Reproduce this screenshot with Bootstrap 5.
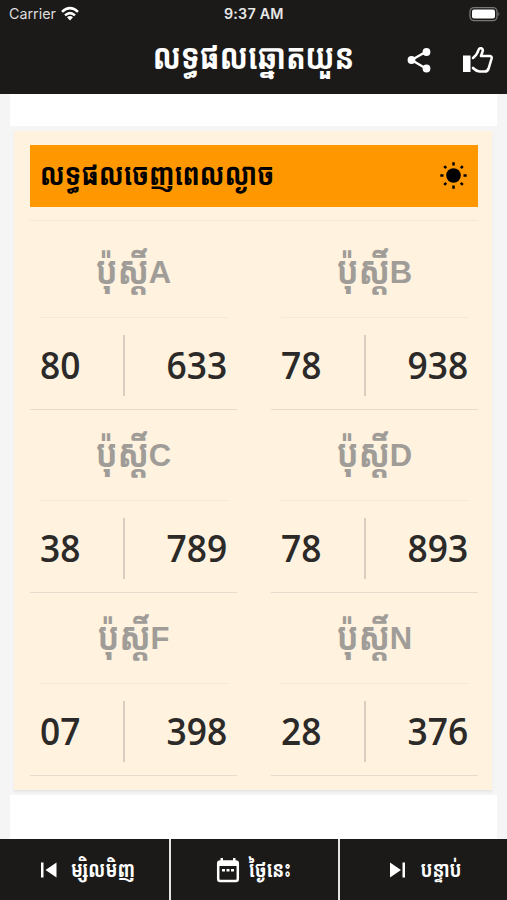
<!DOCTYPE html>
<html lang="km">
<head>
<meta charset="utf-8">
<meta name="viewport" content="width=device-width, initial-scale=1">
<title>លទ្ធផលឆ្នោតយួន</title>
<link href="https://cdn.jsdelivr.net/npm/bootstrap@5.3.0/dist/css/bootstrap.min.css" rel="stylesheet">
<style>
body{height:900px;overflow:hidden;background:#f5f5f6;font-family:"Noto Sans Khmer","Khmer OS","Noto Sans","Liberation Sans",sans-serif}
svg{display:block;flex:none}
.top-area{height:94px;background:#1b1a18}
.status{height:28px;padding:0 7px 0 9px;font:400 14.3px/28px Inter,sans-serif;color:#ddd}
.status .clock{left:224px;top:0;font-weight:600;letter-spacing:.2px;color:#e8e8e8}
.titlebar{height:60px;padding-right:13px}
.titlebar h1{position:absolute;left:0;right:0;text-align:center;font-size:29.2px;line-height:56px;font-weight:700;transform:translateY(-2px) scaleY(1.22)}
.sheet{width:487px;height:745px;margin-left:10px;background:#fff}
.gapband{height:32px}
.result-frame{height:669px;background:#f5f5f6;padding:5px 5px 0 4px}
.result{height:659px;background:#fff2df;padding:14px 14px 0 16px;box-shadow:0 2px 2px #0001}
.period{height:62px;background:#ff9800;padding:0 10px;margin-bottom:13px;color:#000}
.period h2{font-size:25.6px;line-height:60px;font-weight:700;transform:translateY(-2px) scaleY(1.22)}
.hair{border-top:1px solid #f4e8d8}
.posts{display:grid;grid-template-columns:207px 207px;justify-content:space-between;padding-top:6px}
.post{height:183px;border-bottom:1.5px solid #e6dccd}
.post-name{height:90px;color:#a09c97;font-weight:700;font-size:32px;line-height:89px}
.post-name span{display:block;transform:translateY(-3px) scaleY(1.24)}
.post-name b{font:700 31px/89px "Liberation Sans",sans-serif;padding-top:1px}
.rule{margin:0 9px 0 10px}
.nums{height:91px;padding:2px 10px 0;font:600 38px/90px "Open Sans","Noto Sans",sans-serif;color:#2b2a28}
.nums span{transform:translateY(-1px) scaleX(.93);transform-origin:left;width:41px}
.nums span:last-child{transform-origin:right;width:auto}
.split{width:2px;height:61px;background:#d9cfc0;margin:1px 0 0 5px}
.bottom{height:61px;background:#1b1a18}
.bottom a{color:#fff;text-decoration:none;font-weight:700;font-size:17.6px;line-height:56px;gap:12px}
.bottom a span{transform:translateY(-2px) scaleY(1.26)}
.bottom a:first-child svg{margin-left:5px}
.bottom a:nth-child(2){gap:9px}
.bottom a:last-child svg{margin-left:5px}
.bottom a+a{box-shadow:inset 2px 0 #e5e5e5}
</style>
<script src="https://cdn.jsdelivr.net/npm/bootstrap@5.3.0/dist/js/bootstrap.bundle.min.js"></script>
</head>
<body>
<header class="top-area text-white">
  <div class="status d-flex align-items-center position-relative">
    <span>Carrier</span>
    <svg class="ms-1" width="20" height="16" viewBox="0 0 20 16" fill="none" stroke="#fff" stroke-width="2.5"><path d="M2 5.800Q10-1.500 18 5.800M5 9.400q5-4.600 10 0"/><path d="M10 14.500l-3-3.200q3-2.400 6 0z" fill="#fff" stroke="none"/></svg>
    <span class="clock position-absolute">9:37 AM</span>
    <svg class="ms-auto" width="31" height="16" viewBox="0 0 31 16"><rect x="1" y="1.600" width="27" height="13" rx="4" fill="none" stroke="#777" stroke-width="1.300"/><rect x="3" y="3.600" width="23" height="9" rx="2" fill="#fff"/><path d="M29.300 6q2 2 0 4.200z" fill="#777"/></svg>
  </div>
  <div class="titlebar d-flex align-items-center justify-content-end position-relative">
    <h1 class="m-0">លទ្ធផលឆ្នោតយួន</h1>
    <svg class="mt-1" width="26" height="28" viewBox="0 0 26 28" fill="#fff"><path d="M20 5.700L5.500 14 20 22.500" fill="none" stroke="#fff" stroke-width="2.300"/><circle cx="20.500" cy="6" r="3.900"/><circle cx="5.500" cy="14" r="3.900"/><circle cx="20.500" cy="22.500" r="3.900"/></svg>
    <svg class="mt-1" style="margin-left:28px" width="34" height="32" viewBox="0 0 34 32"><path d="M3 11.500h7.500v16.500H3z" fill="#fff"/><path d="M13 14Q17 11 18.500 6C19.500 2.800 23.700 4.300 22.700 7.200L21 12h9q2 .3 1.600 2.500l-3 10q-1 3-3.800 3h-5.300q-3.200-.2-6.500-3.500" fill="none" stroke="#fff" stroke-width="2.600" stroke-linejoin="round" stroke-linecap="round"/></svg>
  </div>
</header>
<main class="sheet">
  <div class="gapband"></div>
  <div class="result-frame">
  <section class="result">
    <div class="period d-flex align-items-center justify-content-between">
      <h2 class="m-0">លទ្ធផលចេញពេលល្ងាច</h2>
      <svg width="28" height="28" viewBox="0 0 28 28"><circle cx="13.500" cy="13.500" r="7.300"/><path d="M13.500.3v3.200M13.500 23.500v3.200M.3 13.500h3.200M23.500 13.500h3.200M4.200 4.200l2 2M20.800 20.800l2 2M4.200 22.800l2-2M20.800 6.200l2-2" stroke="#000" stroke-width="2.500"/></svg>
    </div>
    <div class="hair"></div>
    <div class="posts">
      <article class="post"><div class="post-name d-flex justify-content-center"><span>ប៉ុស្តិ៍</span><b>A</b></div><div class="hair rule"></div><div class="nums d-flex align-items-center justify-content-between"><span>80</span><i class="split"></i><span>633</span></div></article>
      <article class="post"><div class="post-name d-flex justify-content-center"><span>ប៉ុស្តិ៍</span><b>B</b></div><div class="hair rule"></div><div class="nums d-flex align-items-center justify-content-between"><span>78</span><i class="split"></i><span>938</span></div></article>
      <article class="post"><div class="post-name d-flex justify-content-center"><span>ប៉ុស្តិ៍</span><b>C</b></div><div class="hair rule"></div><div class="nums d-flex align-items-center justify-content-between"><span>38</span><i class="split"></i><span>789</span></div></article>
      <article class="post"><div class="post-name d-flex justify-content-center"><span>ប៉ុស្តិ៍</span><b>D</b></div><div class="hair rule"></div><div class="nums d-flex align-items-center justify-content-between"><span>78</span><i class="split"></i><span>893</span></div></article>
      <article class="post"><div class="post-name d-flex justify-content-center"><span>ប៉ុស្តិ៍</span><b>F</b></div><div class="hair rule"></div><div class="nums d-flex align-items-center justify-content-between"><span>07</span><i class="split"></i><span>398</span></div></article>
      <article class="post"><div class="post-name d-flex justify-content-center"><span>ប៉ុស្តិ៍</span><b>N</b></div><div class="hair rule"></div><div class="nums d-flex align-items-center justify-content-between"><span>28</span><i class="split"></i><span>376</span></div></article>
    </div>
  </section>
  </div>
</main>
<nav class="bottom row g-0">
  <a class="col d-flex align-items-center justify-content-center" href="#"><svg width="20" height="18" viewBox="0 0 20 18" fill="#fff"><path d="M2 1.500h2.500v15H2zM17.500 1.500v15L6.500 9z"/></svg><span>ម្សិលមិញ</span></a>
  <a class="col d-flex align-items-center justify-content-center" href="#"><svg width="24" height="26" viewBox="0 0 24 26"><rect x="2.200" y="4.500" width="19.600" height="19.500" rx="2" fill="none" stroke="#fff" stroke-width="2.500"/><path d="M2 4h20v5H2zM4.500 1h2.500v4H4.500zM17 1h2.500v4H17zM6 12h3v2.500H6zM10.500 12h3v2.500h-3zM15 12h3v2.500h-3z" fill="#fff"/></svg><span>ថ្ងៃនេះ</span></a>
  <a class="col d-flex align-items-center justify-content-center" href="#"><svg width="20" height="18" viewBox="0 0 20 18" fill="#fff"><path d="M2 1.500v15L13 9zM14.500 1.500H17v15h-2.500z"/></svg><span>បន្ទាប់</span></a>
</nav>
</body>
</html>
